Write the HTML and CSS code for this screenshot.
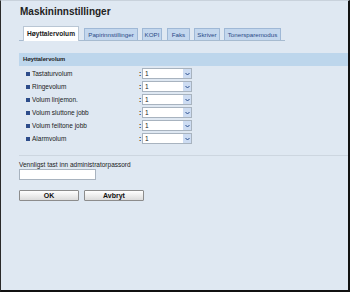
FILE: index.html
```html
<!DOCTYPE html>
<html lang="no">
<head>
    <meta charset="UTF-8">
    <meta name="viewport" content="width=device-width, initial-scale=1.0">
    <title>Maskininnstillinger</title>

    <link rel="stylesheet" href="styles.css">
</head>
<body>
    <div class="page">
        <h1 class="title">Maskininnstillinger</h1>

        <div class="tabs">
            <span class="tab active t-volume">Høyttalervolum</span>
            <span class="tab t-paper">Papirinnstillinger</span>
            <span class="tab t-copy">KOPI</span>
            <span class="tab t-fax">Faks</span>
            <span class="tab t-printer">Skriver</span>
            <span class="tab t-toner">Tonersparemodus</span>
        </div>

        <div class="section">Høyttalervolum</div>

        <div class="rows">
            <div class="row">
                <span class="label"><i class="bullet"></i>Tastaturvolum</span>
                <span class="colon">:</span>
                <div class="select"><span class="value">1</span><span class="arrow"><svg width="5" height="4" viewBox="0 0 5 4"><path d="M0.5 1 L2.5 3 L4.5 1" fill="none" stroke="#2b4f8f" stroke-width="1"/></svg></span></div>
            </div>
            <div class="row">
                <span class="label"><i class="bullet"></i>Ringevolum</span>
                <span class="colon">:</span>
                <div class="select"><span class="value">1</span><span class="arrow"><svg width="5" height="4" viewBox="0 0 5 4"><path d="M0.5 1 L2.5 3 L4.5 1" fill="none" stroke="#2b4f8f" stroke-width="1"/></svg></span></div>
            </div>
            <div class="row">
                <span class="label"><i class="bullet"></i>Volum linjemon.</span>
                <span class="colon">:</span>
                <div class="select"><span class="value">1</span><span class="arrow"><svg width="5" height="4" viewBox="0 0 5 4"><path d="M0.5 1 L2.5 3 L4.5 1" fill="none" stroke="#2b4f8f" stroke-width="1"/></svg></span></div>
            </div>
            <div class="row">
                <span class="label"><i class="bullet"></i>Volum sluttone jobb</span>
                <span class="colon">:</span>
                <div class="select"><span class="value">1</span><span class="arrow"><svg width="5" height="4" viewBox="0 0 5 4"><path d="M0.5 1 L2.5 3 L4.5 1" fill="none" stroke="#2b4f8f" stroke-width="1"/></svg></span></div>
            </div>
            <div class="row">
                <span class="label"><i class="bullet"></i>Volum feiltone jobb</span>
                <span class="colon">:</span>
                <div class="select"><span class="value">1</span><span class="arrow"><svg width="5" height="4" viewBox="0 0 5 4"><path d="M0.5 1 L2.5 3 L4.5 1" fill="none" stroke="#2b4f8f" stroke-width="1"/></svg></span></div>
            </div>
            <div class="row">
                <span class="label"><i class="bullet"></i>Alarmvolum</span>
                <span class="colon">:</span>
                <div class="select"><span class="value">1</span><span class="arrow"><svg width="5" height="4" viewBox="0 0 5 4"><path d="M0.5 1 L2.5 3 L4.5 1" fill="none" stroke="#2b4f8f" stroke-width="1"/></svg></span></div>
            </div>
        </div>

        <div class="password">
            <label>Vennligst tast inn administratorpassord</label>
            <div class="input"></div>
        </div>

        <div class="buttons">
            <button>OK</button>
            <button>Avbryt</button>
        </div>
    </div>
</body>
</html>
```

FILE: styles.css
```css
html, body{
    margin: 0;
    height: 100%;
}

body{
    background-color: #dfe8f2;
    font-family: "Liberation Sans", Arial, sans-serif;
    color: #1a1a1a;
    box-sizing: border-box;
    border-left: 1px solid #2a2a2a;
    border-right: 2px solid #111;
    border-bottom: 2px solid #111;
    border-top: 1px solid #c9d2dc;
    overflow: hidden;
}

.page{
    padding: 5px 0 0 18px;
}

.title{
    margin: 0 0 0 1px;
    font-size: 10px;
    line-height: 11px;
    font-weight: bold;
    color: #222;
}

.tabs{
    display: flex;
    align-items: flex-end;
    gap: 4px;
    width: 262px;
    height: 15px;
    margin-top: 8px;
    padding-left: 4px;
    border-bottom: 1px solid #a7bbd0;
}

.tab{
    box-sizing: border-box;
    height: 12px;
    line-height: 11px;
    text-align: center;
    font-size: 6.2px;
    color: #2a4a86;
    background-color: #c3d7ee;
    border: 1px solid #9fb8d6;
    border-bottom: none;
    white-space: nowrap;
}

.tab.active{
    height: 15px;
    line-height: 14px;
    margin-bottom: -1px;
    font-size: 6.6px;
    font-weight: bold;
    color: #1a1a1a;
    background-color: #fff;
    border-color: #b9c6d4;
}

.t-volume{ width: 56px; margin-right: 1px; }
.t-paper{ width: 54px; }
.t-copy{ width: 20px; margin-right: 1px; }
.t-fax{ width: 23px; }
.t-printer{ width: 26px; }
.t-toner{ width: 57px; }

.section{
    margin-top: 12px;
    height: 13px;
    line-height: 13px;
    padding-left: 4px;
    font-size: 5.8px;
    font-weight: bold;
    background-color: #bdd6ec;
}

.rows{
    padding-top: 2px;
}

.row{
    display: flex;
    align-items: center;
    height: 11px;
    margin-bottom: 2px;
    font-size: 6.5px;
}

.label{
    display: flex;
    align-items: center;
    box-sizing: border-box;
    width: 120px;
    padding-left: 7px;
}

.bullet{
    width: 4px;
    height: 4px;
    margin-right: 2px;
    background-color: #2d4c8a;
}

.colon{
    width: 3px;
    font-weight: bold;
}

.select{
    display: flex;
    width: 48px;
    height: 9px;
    background-color: #fff;
    border: 1px solid #a8b3bf;
}

.value{
    flex: 1;
    line-height: 9px;
    padding-left: 2px;
}

.arrow{
    display: flex;
    align-items: center;
    justify-content: center;
    width: 8px;
    background-color: #cddcf2;
}

.password{
    margin-top: 11px;
    padding-top: 4px;
    border-top: 1px solid #cdd6e0;
    font-size: 6.5px;
}

.password label{
    display: block;
    line-height: 9px;
}

.input{
    width: 75px;
    height: 9px;
    background-color: #fff;
    border: 1px solid #a8b3bf;
}

.buttons{
    display: flex;
    gap: 5px;
    margin-top: 10px;
}

.buttons button{
    width: 60px;
    height: 11px;
    padding: 0;
    font-family: "Liberation Sans", Arial, sans-serif;
    font-size: 7px;
    font-weight: bold;
    line-height: 9px;
    color: #111;
    background: linear-gradient(#ffffff, #dcdcdc);
    border: 1px solid #8c8c8c;
    border-radius: 1px;
}
```
